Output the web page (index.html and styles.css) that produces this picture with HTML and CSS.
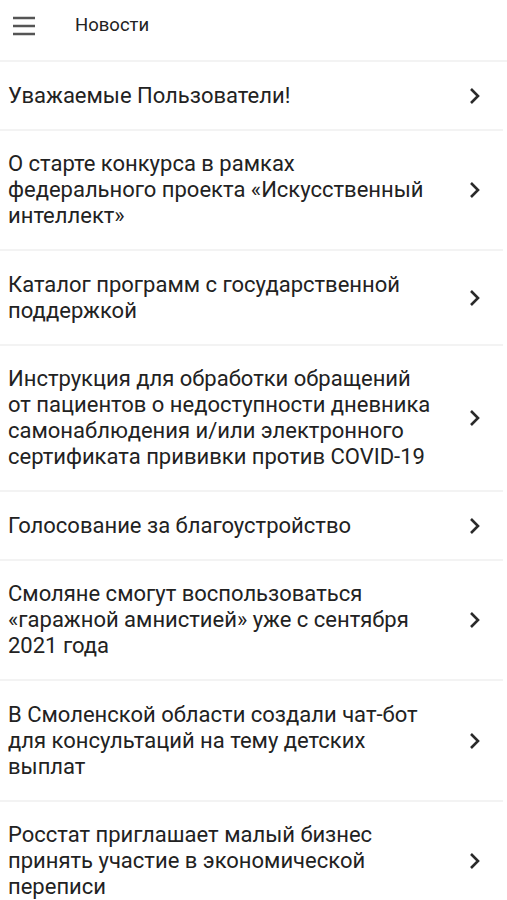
FILE: index.html
```html
<!DOCTYPE html>
<html lang="ru">
  <head>
    <meta charset="UTF-8" />
    <meta name="viewport" content="width=device-width, initial-scale=1.0" />
    <title>Новости</title>
    <link rel="stylesheet" href="styles.css">
  </head>
  <body>
    <header class="toolbar">
      <svg class="menu-icon" width="24" height="24" viewBox="0 0 24 24">
        <path d="M1 5h22M1 13h22M1 21h22" stroke="#555" stroke-width="2.6" fill="none" />
      </svg>
      <span class="toolbar-title">Новости</span>
    </header>

    <ul class="news-list">
      <li class="news-item">
        <span class="news-title">Уважаемые Пользователи!</span>
        <svg class="chevron" width="12" height="18" viewBox="0 0 12 18"><path d="M2 2l7 7-7 7" /></svg>
      </li>
      <li class="news-item">
        <span class="news-title">О старте конкурса в рамках федерального проекта «Искусственный интеллект»</span>
        <svg class="chevron" width="12" height="18" viewBox="0 0 12 18"><path d="M2 2l7 7-7 7" /></svg>
      </li>
      <li class="news-item">
        <span class="news-title">Каталог программ с государственной поддержкой</span>
        <svg class="chevron" width="12" height="18" viewBox="0 0 12 18"><path d="M2 2l7 7-7 7" /></svg>
      </li>
      <li class="news-item">
        <span class="news-title">Инструкция для обработки обращений от пациентов о недоступности дневника самонаблюдения и/или электронного сертификата прививки против COVID-19</span>
        <svg class="chevron" width="12" height="18" viewBox="0 0 12 18"><path d="M2 2l7 7-7 7" /></svg>
      </li>
      <li class="news-item">
        <span class="news-title">Голосование за благоустройство</span>
        <svg class="chevron" width="12" height="18" viewBox="0 0 12 18"><path d="M2 2l7 7-7 7" /></svg>
      </li>
      <li class="news-item">
        <span class="news-title">Смоляне смогут воспользоваться «гаражной амнистией» уже с сентября 2021 года</span>
        <svg class="chevron" width="12" height="18" viewBox="0 0 12 18"><path d="M2 2l7 7-7 7" /></svg>
      </li>
      <li class="news-item">
        <span class="news-title">В Смоленской области создали чат-бот для консультаций на тему детских выплат</span>
        <svg class="chevron" width="12" height="18" viewBox="0 0 12 18"><path d="M2 2l7 7-7 7" /></svg>
      </li>
      <li class="news-item">
        <span class="news-title">Росстат приглашает малый бизнес принять участие в экономической переписи</span>
        <svg class="chevron" width="12" height="18" viewBox="0 0 12 18"><path d="M2 2l7 7-7 7" /></svg>
      </li>
    </ul>
  </body>
</html>
```

FILE: styles.css
```css
* {
  box-sizing: border-box;
}

body {
  margin: 0;
  background: #fff;
  color: #222;
  font-family: Roboto, "Noto Sans", sans-serif;
}

.toolbar {
  height: 62px;
  display: flex;
  align-items: center;
  padding: 0 0 10px 12px;
  border-bottom: 2px solid #f3f3f3;
}

.menu-icon {
  display: block;
}

.toolbar-title {
  margin-left: 39px;
  font-size: 18.5px;
  color: #222;
}

.news-list {
  list-style: none;
  margin: 0;
  padding: 0;
}

.news-item {
  display: flex;
  align-items: center;
  padding: 20.5px 0 20px 8px;
  margin-right: 4px;
  border-bottom: 2px solid #f3f3f3;
}

.news-title {
  flex: 1;
  font-size: 22px;
  line-height: 26px;
  padding-right: 30px;
}

.chevron {
  margin-right: 22px;
  fill: none;
  stroke: #2a2a2a;
  stroke-width: 2.6;
}
```
